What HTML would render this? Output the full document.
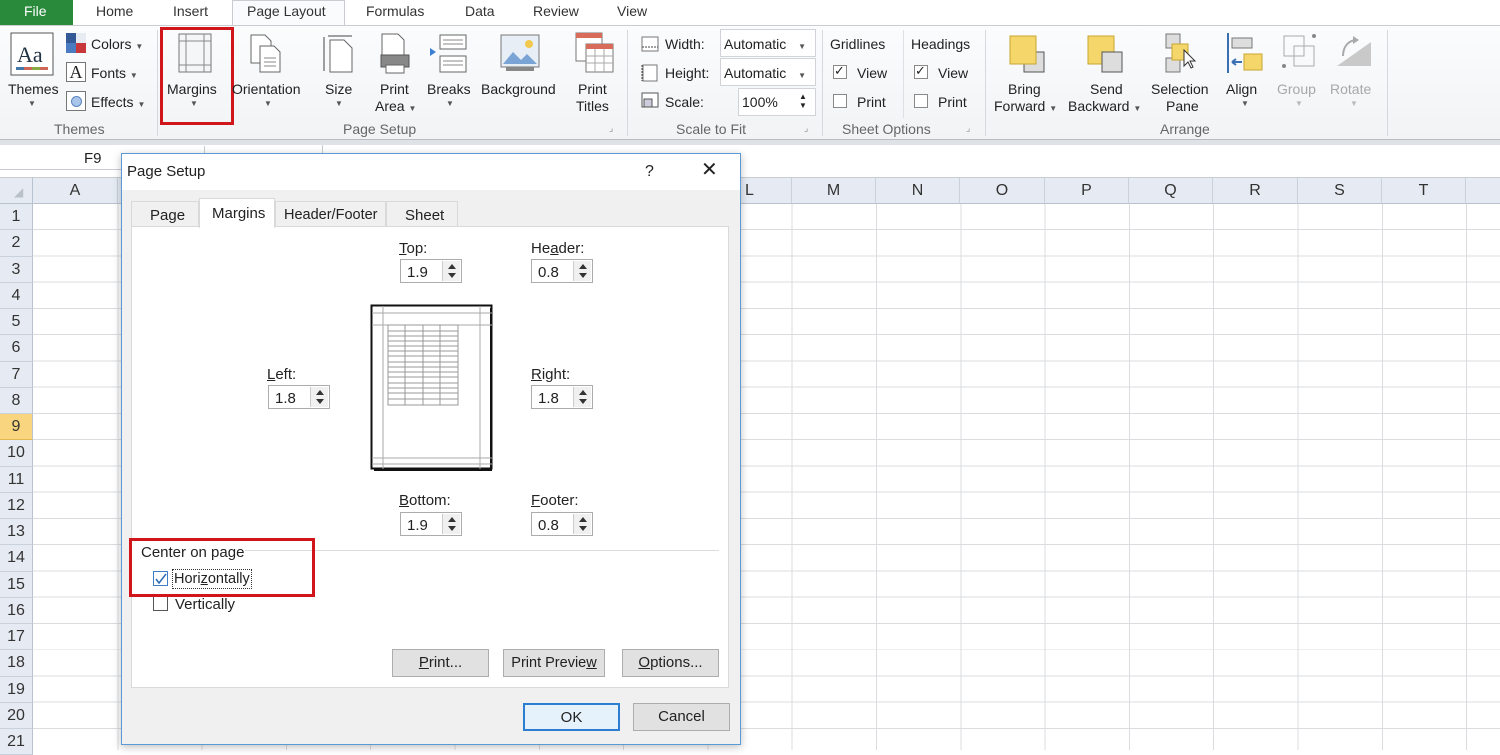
<!DOCTYPE html>
<html><head><meta charset="utf-8">
<style>
*{margin:0;padding:0;box-sizing:border-box}
body{width:1500px;height:750px;overflow:hidden;background:#fff;font-family:"Liberation Sans",sans-serif;font-size:14px;color:#222;position:relative}
.a{position:absolute}
.t{position:absolute;white-space:nowrap;line-height:1}
.tab{position:absolute;top:3px;font-size:14px;color:#333}
.lbl{position:absolute;top:121px;font-size:14px;color:#666}
.c{text-align:center}
.dd{font-size:8px;color:#555}
.sep{position:absolute;top:30px;width:1px;height:106px;background:#d5d9de}
.rh{position:absolute;left:0;width:33px;height:26.25px;background:#e6ebf3;border-bottom:1px solid #c9d1dc;border-right:1px solid #b9c3cf;text-align:center;font-size:16px;line-height:26px;color:#333;overflow:hidden}
.ch{position:absolute;top:178px;height:26px;background:#e6ebf3;border-right:1px solid #c9d1dc;border-bottom:1px solid #b9c3cf;text-align:center;font-size:16px;line-height:26px;color:#333}
.spin{position:absolute;width:62px;height:24px;border:1px solid #acacac;background:#fff}
.spin span{position:absolute;left:6px;top:4px;font-size:15px}
.spin i{position:absolute;right:1px;top:1px;width:18px;height:20px;background:#f0f0f0;border-left:1px solid #ccc}
.spin i:before{content:"";position:absolute;left:5px;top:3px;border:4px solid transparent;border-bottom:5px solid #333;border-top:0}
.spin i:after{content:"";position:absolute;left:5px;top:12px;border:4px solid transparent;border-top:5px solid #333;border-bottom:0}
.btn{position:absolute;height:28px;background:#e1e1e1;border:1px solid #adadad;text-align:center;line-height:26px;font-size:15px}
.dl{position:absolute;font-size:15px;white-space:nowrap}
.cb{position:absolute;width:15px;height:15px;border:1px solid #555;background:#fff}
.rcb{position:absolute;width:14px;height:14px;border:1px solid #888;background:#fff}
</style></head><body>
<div class="a" style="left:0;top:0;width:73px;height:25px;background:#2a8a3c"></div>
<div class="tab" style="left:24px;color:#fff">File</div>
<div class="tab" style="left:96px">Home</div>
<div class="tab" style="left:173px">Insert</div>
<div class="a" style="left:232px;top:0;width:113px;height:26px;background:#fafbfc;border:1px solid #c9ccd1;border-bottom:none"></div>
<div class="tab" style="left:247px">Page Layout</div>
<div class="tab" style="left:366px">Formulas</div>
<div class="tab" style="left:465px">Data</div>
<div class="tab" style="left:533px">Review</div>
<div class="tab" style="left:617px">View</div>
<div class="a" style="left:0;top:25px;width:1500px;height:115px;background:linear-gradient(#fbfcfd,#f1f3f5);border-top:1px solid #c9ccd1;border-bottom:1px solid #b8bcc2"></div>
<div class="a" style="left:0;top:140px;width:1500px;height:5px;background:#dfe3e8"></div>
<svg class="a" style="left:10px;top:32px" width="44" height="46"><rect x="1" y="1" width="42" height="42" fill="#fff" stroke="#555"/><text x="7" y="30" font-family="Liberation Serif" font-size="22" fill="#234">Aa</text><rect x="6" y="35" width="32" height="3" fill="#c65"/><rect x="6" y="35" width="8" height="3" fill="#47a"/><rect x="22" y="35" width="8" height="3" fill="#8a4"/></svg>
<div class="t" style="left:8px;top:82px">Themes</div><div class="t dd" style="left:28px;top:100px">▼</div>
<svg class="a" style="left:66px;top:33px" width="20" height="20"><rect width="10" height="10" fill="#335a96"/><rect x="10" width="10" height="10" fill="#e7ebf2"/><rect y="10" width="10" height="10" fill="#4a7bc0"/><rect x="10" y="10" width="10" height="10" fill="#c8383a"/></svg>
<div class="t" style="left:91px;top:37px">Colors <span class="dd">▼</span></div>
<div class="a" style="left:66px;top:62px;width:20px;height:20px;border:1px solid #777;background:#fff;font-family:'Liberation Serif';font-size:18px;text-align:center;line-height:19px">A</div>
<div class="t" style="left:91px;top:66px">Fonts <span class="dd">▼</span></div>
<div class="a" style="left:66px;top:91px;width:20px;height:20px;border:1px solid #777;background:#fff"><div class="a" style="left:4px;top:4px;width:11px;height:11px;border-radius:50%;background:#a9c6ea;border:1px solid #5a85c0"></div></div>
<div class="t" style="left:91px;top:95px">Effects <span class="dd">▼</span></div>
<div class="lbl" style="left:54px">Themes</div>
<div class="sep" style="left:157px"></div>
<svg class="a" style="left:178px;top:33px" width="34" height="40"><rect x="1" y="1" width="32" height="38" fill="#f4f6f8" stroke="#777"/><line x1="8" y1="1" x2="8" y2="39" stroke="#888"/><line x1="26" y1="1" x2="26" y2="39" stroke="#888"/><line x1="1" y1="8" x2="33" y2="8" stroke="#888"/><line x1="1" y1="32" x2="33" y2="32" stroke="#888"/></svg>
<div class="t" style="left:167px;top:82px">Margins</div><div class="t dd" style="left:190px;top:100px">▼</div>
<div class="a" style="left:160px;top:27px;width:74px;height:98px;border:3px solid #d0151b"></div>
<svg class="a" style="left:248px;top:34px" width="36" height="40"><path d="M3 1h14l6 6v22H3z" fill="#fff" stroke="#666"/><path d="M12 12h14l6 6v20H12z" fill="#fff" stroke="#666"/><path d="M16 24h12M16 28h12M16 32h12" stroke="#888"/></svg>
<div class="t" style="left:232px;top:82px">Orientation</div><div class="t dd" style="left:264px;top:100px">▼</div>
<svg class="a" style="left:322px;top:34px" width="34" height="40"><path d="M2 3v34" stroke="#444"/><path d="M6 2h24" stroke="#444"/><path d="M8 6h14l8 8v24H8z" fill="#fff" stroke="#666"/></svg>
<div class="t" style="left:325px;top:82px">Size</div><div class="t dd" style="left:335px;top:100px">▼</div>
<svg class="a" style="left:378px;top:33px" width="34" height="42"><path d="M4 1h16l6 6v20H4z" fill="#fff" stroke="#666"/><rect x="3" y="22" width="28" height="12" fill="#888" stroke="#555"/><rect x="8" y="32" width="18" height="8" fill="#fff" stroke="#666"/></svg>
<div class="t" style="left:380px;top:82px">Print</div><div class="t" style="left:375px;top:99px">Area <span class="dd">▼</span></div>
<svg class="a" style="left:428px;top:34px" width="40" height="40"><path d="M12 1h26v14H12zM12 22h26v16H12z" fill="#fff" stroke="#666"/><path d="M15 6h20M15 10h20M15 27h20M15 31h20" stroke="#888"/><path d="M2 14l6 4-6 4z" fill="#3b7fd1"/></svg>
<div class="t" style="left:427px;top:82px">Breaks</div><div class="t dd" style="left:446px;top:100px">▼</div>
<svg class="a" style="left:500px;top:34px" width="42" height="40"><rect x="1" y="1" width="38" height="32" fill="#e7eef6" stroke="#777"/><path d="M3 30l10-12 8 8 6-6 10 10z" fill="#7aa3d6"/><circle cx="29" cy="10" r="4" fill="#f2c94c"/><rect x="6" y="33" width="28" height="4" fill="#888"/></svg>
<div class="t" style="left:481px;top:82px">Background</div>
<svg class="a" style="left:575px;top:32px" width="40" height="42"><rect x="1" y="1" width="26" height="28" fill="#fff" stroke="#777"/><rect x="1" y="1" width="26" height="5" fill="#d96b5b"/><rect x="11" y="12" width="27" height="28" fill="#fff" stroke="#777"/><rect x="11" y="12" width="27" height="5" fill="#d96b5b"/><path d="M11 24h27M11 31h27M20 17v23M29 17v23" stroke="#aaa"/></svg>
<div class="t" style="left:578px;top:82px">Print</div><div class="t" style="left:576px;top:99px">Titles</div>
<div class="lbl" style="left:343px">Page Setup</div>
<div class="t" style="left:609px;top:124px;font-size:9px;color:#888">⌟</div>
<div class="sep" style="left:627px"></div>
<svg class="a" style="left:640px;top:35px" width="20" height="80"><rect x="2" y="2" width="16" height="14" fill="#fff" stroke="#777"/><path d="M2 12h16" stroke="#444" stroke-dasharray="2 1"/><rect x="3" y="30" width="14" height="16" fill="#fff" stroke="#777"/><path d="M2 30v16" stroke="#444" stroke-dasharray="2 1"/><rect x="2" y="58" width="16" height="14" fill="#fff" stroke="#555"/><rect x="4" y="64" width="8" height="8" fill="#ccd" stroke="#555"/></svg>
<div class="t" style="left:665px;top:37px">Width:</div>
<div class="t" style="left:665px;top:66px">Height:</div>
<div class="t" style="left:665px;top:95px">Scale:</div>
<div class="a" style="left:720px;top:29px;width:96px;height:28px;border:1px solid #d0d4d9;background:#fff"></div>
<div class="t" style="left:724px;top:37px">Automatic <span class="dd" style="margin-left:8px">▼</span></div>
<div class="a" style="left:720px;top:58px;width:96px;height:28px;border:1px solid #d0d4d9;background:#fff"></div>
<div class="t" style="left:724px;top:66px">Automatic <span class="dd" style="margin-left:8px">▼</span></div>
<div class="a" style="left:738px;top:88px;width:78px;height:28px;border:1px solid #d0d4d9;background:#fff"></div>
<div class="t" style="left:742px;top:95px">100%</div><div class="t" style="left:799px;top:92px;font-size:8px;line-height:9px">▲<br>▼</div>
<div class="lbl" style="left:676px">Scale to Fit</div>
<div class="t" style="left:804px;top:124px;font-size:9px;color:#888">⌟</div>
<div class="sep" style="left:822px"></div>
<div class="t" style="left:830px;top:37px">Gridlines</div>
<div class="rcb" style="left:833px;top:65px"></div><div class="t" style="left:834px;top:64px;font-size:13px">✓</div>
<div class="t" style="left:857px;top:66px">View</div>
<div class="rcb" style="left:833px;top:94px"></div><div class="t" style="left:857px;top:95px">Print</div>
<div class="a" style="left:903px;top:30px;width:1px;height:88px;background:#dde0e4"></div>
<div class="t" style="left:911px;top:37px">Headings</div>
<div class="rcb" style="left:914px;top:65px"></div><div class="t" style="left:915px;top:64px;font-size:13px">✓</div>
<div class="t" style="left:938px;top:66px">View</div>
<div class="rcb" style="left:914px;top:94px"></div><div class="t" style="left:938px;top:95px">Print</div>
<div class="lbl" style="left:842px">Sheet Options</div>
<div class="t" style="left:966px;top:124px;font-size:9px;color:#888">⌟</div>
<div class="sep" style="left:985px"></div>
<svg class="a" style="left:1008px;top:34px" width="40" height="42"><rect x="16" y="18" width="20" height="20" fill="#ddd" stroke="#555"/><rect x="2" y="2" width="26" height="28" fill="#f4d66a" stroke="#c9a530"/></svg>
<div class="t" style="left:1008px;top:82px">Bring</div><div class="t" style="left:994px;top:99px">Forward <span class="dd">▼</span></div>
<svg class="a" style="left:1086px;top:34px" width="40" height="42"><rect x="2" y="2" width="26" height="28" fill="#f4d66a" stroke="#c9a530"/><rect x="16" y="18" width="20" height="20" fill="#ddd" stroke="#555"/></svg>
<div class="t" style="left:1090px;top:82px">Send</div><div class="t" style="left:1068px;top:99px">Backward <span class="dd">▼</span></div>
<svg class="a" style="left:1164px;top:32px" width="40" height="44"><rect x="2" y="2" width="14" height="14" fill="#ddd" stroke="#777"/><rect x="2" y="26" width="14" height="14" fill="#ddd" stroke="#777"/><rect x="8" y="12" width="16" height="16" fill="#f4d66a" stroke="#c9a530"/><path d="M20 18l0 16 4-4 3 6 2-1-3-6 5 0z" fill="#fff" stroke="#333"/></svg>
<div class="t" style="left:1151px;top:82px">Selection</div><div class="t" style="left:1166px;top:99px">Pane</div>
<svg class="a" style="left:1226px;top:32px" width="40" height="44"><path d="M2 1v40" stroke="#3b6fb4" stroke-width="2"/><rect x="6" y="6" width="20" height="10" fill="#ddd" stroke="#777"/><rect x="18" y="22" width="18" height="16" fill="#f4d66a" stroke="#c9a530"/><path d="M6 30h10M6 30l4-3M6 30l4 3" stroke="#3b6fb4" stroke-width="2"/></svg>
<div class="t" style="left:1226px;top:82px">Align</div><div class="t dd" style="left:1241px;top:100px">▼</div>
<svg class="a" style="left:1282px;top:34px" width="36" height="40"><rect x="2" y="2" width="20" height="20" fill="none" stroke="#aaa"/><rect x="12" y="12" width="20" height="20" fill="none" stroke="#aaa"/><circle cx="2" cy="32" r="2" fill="#888"/><circle cx="32" cy="2" r="2" fill="#888"/></svg>
<div class="t" style="left:1277px;top:82px;color:#a8a8a8">Group</div><div class="t dd" style="left:1295px;top:100px;color:#bbb">▼</div>
<svg class="a" style="left:1335px;top:34px" width="40" height="40"><path d="M2 32L36 32 36 8z" fill="#c9c9c9"/><path d="M8 22c0-10 6-16 14-16" stroke="#aaa" fill="none" stroke-width="2"/><path d="M18 2l6 4-6 4" fill="#aaa"/></svg>
<div class="t" style="left:1330px;top:82px;color:#a8a8a8">Rotate</div><div class="t dd" style="left:1350px;top:100px;color:#bbb">▼</div>
<div class="lbl" style="left:1160px">Arrange</div>
<div class="sep" style="left:1387px"></div>
<div class="a" style="left:0;top:145px;width:1500px;height:33px;background:#fff;border-bottom:1px solid #c9cdd2"></div>
<div class="a" style="left:0;top:146px;width:205px;height:24px;border-right:1px solid #c9cdd2;border-bottom:1px solid #c9cdd2"></div>
<div class="t" style="left:84px;top:151px;font-size:15px">F9</div>
<div class="a" style="left:322px;top:145px;width:1px;height:30px;background:#c9cdd2"></div>
<div class="a" style="left:33px;top:204px;width:1467px;height:546px;background-image:repeating-linear-gradient(to bottom,transparent 0,transparent 25.25px,#dadcdf 25.25px,#dadcdf 26.25px),repeating-linear-gradient(to right,transparent 0,transparent 83.3px,#dadcdf 83.3px,#dadcdf 84.3px);background-position:0 0,1px 0"></div>
<div class="a" style="left:0;top:178px;width:33px;height:26px;background:#e6ebf3;border-right:1px solid #b9c3cf;border-bottom:1px solid #b9c3cf"></div>
<div class="t" style="left:14px;top:186px;color:#b9c0c8;font-size:12px">◢</div>
<div class="ch" style="left:33px;width:85px">A</div>
<div class="ch" style="left:118px;width:590px"></div>
<div class="ch" style="left:708px;width:84px">L</div>
<div class="ch" style="left:792px;width:84px">M</div>
<div class="ch" style="left:876px;width:84px">N</div>
<div class="ch" style="left:960px;width:85px">O</div>
<div class="ch" style="left:1045px;width:84px">P</div>
<div class="ch" style="left:1129px;width:84px">Q</div>
<div class="ch" style="left:1213px;width:85px">R</div>
<div class="ch" style="left:1298px;width:84px">S</div>
<div class="ch" style="left:1382px;width:84px">T</div>
<div class="ch" style="left:1466px;width:40px"></div>
<div class="rh" style="top:204px">1</div><div class="rh" style="top:230.25px">2</div><div class="rh" style="top:256.5px">3</div><div class="rh" style="top:282.75px">4</div><div class="rh" style="top:309px">5</div><div class="rh" style="top:335.25px">6</div><div class="rh" style="top:361.5px">7</div><div class="rh" style="top:387.75px">8</div><div class="rh" style="top:414px;background:#f8d57e;border-bottom-color:#e1b84f">9</div><div class="rh" style="top:440.25px">10</div><div class="rh" style="top:466.5px">11</div><div class="rh" style="top:492.75px">12</div><div class="rh" style="top:519px">13</div><div class="rh" style="top:545.25px">14</div><div class="rh" style="top:571.5px">15</div><div class="rh" style="top:597.75px">16</div><div class="rh" style="top:624px">17</div><div class="rh" style="top:650.25px">18</div><div class="rh" style="top:676.5px">19</div><div class="rh" style="top:702.75px">20</div><div class="rh" style="top:729px">21</div>
<div class="a" style="left:121px;top:153px;width:620px;height:592px;background:#f0f0f0;border:1px solid #5b9bd5;box-shadow:0 2px 8px rgba(0,0,0,.25)"></div>
<div class="a" style="left:122px;top:154px;width:618px;height:36px;background:#fff"></div>
<div class="t" style="left:127px;top:164px;font-size:15px">Page Setup</div>
<div class="t" style="left:645px;top:164px;font-size:16px">?</div>
<div class="t" style="left:701px;top:160px;font-size:20px">✕</div>
<div class="a" style="left:131px;top:201px;width:68px;height:26px;background:#f0f0f0;border:1px solid #d9d9d9;border-bottom:none"></div>
<div class="a" style="left:275px;top:201px;width:111px;height:26px;background:#f0f0f0;border:1px solid #d9d9d9;border-bottom:none"></div>
<div class="a" style="left:386px;top:201px;width:72px;height:26px;background:#f0f0f0;border:1px solid #d9d9d9;border-bottom:none"></div>
<div class="a" style="left:131px;top:226px;width:598px;height:462px;background:#fff;border:1px solid #d9d9d9"></div>
<div class="a" style="left:199px;top:198px;width:76px;height:30px;background:#fff;border:1px solid #d9d9d9;border-bottom:none"></div>
<div class="dl" style="left:150px;top:207px">Page</div>
<div class="dl" style="left:212px;top:205px">Margins</div>
<div class="dl" style="left:284px;top:207px;font-size:14.5px">Header/Footer</div>
<div class="dl" style="left:405px;top:207px">Sheet</div>
<div class="dl" style="left:399px;top:240px"><u>T</u>op:</div>
<div class="spin" style="left:400px;top:259px"><span>1.9</span><i></i></div>
<div class="dl" style="left:531px;top:240px">He<u>a</u>der:</div>
<div class="spin" style="left:531px;top:259px"><span>0.8</span><i></i></div>
<div class="dl" style="left:267px;top:366px"><u>L</u>eft:</div>
<div class="spin" style="left:268px;top:385px"><span>1.8</span><i></i></div>
<div class="dl" style="left:531px;top:366px"><u>R</u>ight:</div>
<div class="spin" style="left:531px;top:385px"><span>1.8</span><i></i></div>
<div class="dl" style="left:399px;top:492px"><u>B</u>ottom:</div>
<div class="spin" style="left:400px;top:512px"><span>1.9</span><i></i></div>
<div class="dl" style="left:531px;top:492px"><u>F</u>ooter:</div>
<div class="spin" style="left:531px;top:512px"><span>0.8</span><i></i></div>
<svg class="a" style="left:370px;top:304px" width="124" height="168"><rect x="1.5" y="1.5" width="120" height="163" fill="#fff" stroke="#111" stroke-width="2"/><path d="M121 4v163M4 166h118" stroke="#111" stroke-width="2"/><path d="M13 2v163M110 2v163M2 9h120M2 21h120M2 154h120M2 160h120" stroke="#aaa"/><g stroke="#999"><rect x="18" y="21" width="70" height="80" fill="none"/><path d="M35 21v80M53 21v80M70 21v80"/><path d="M18 27h70M18 32h70M18 37h70M18 42h70M18 47h70M18 52h70M18 58h70M18 63h70M18 68h70M18 73h70M18 79h70M18 84h70M18 89h70M18 95h70"/></g></svg>
<div class="dl" style="left:141px;top:544px">Center on page</div>
<div class="a" style="left:245px;top:550px;width:474px;height:1px;background:#dcdcdc"></div>
<div class="cb" style="left:153px;top:571px;border-color:#3c7fc6"></div>
<svg class="a" style="left:154px;top:572px" width="14" height="14"><path d="M2 7l3 4 7-9" stroke="#2b6cb5" stroke-width="1.5" fill="none"/></svg>
<div class="a" style="left:172px;top:569px;width:80px;height:20px;border:1px dotted #333"></div>
<div class="dl" style="left:174px;top:571px;font-size:14.5px">Hori<u>z</u>ontally</div>
<div class="cb" style="left:153px;top:596px"></div>
<div class="dl" style="left:175px;top:596px">Vertically</div>
<div class="a" style="left:129px;top:538px;width:186px;height:59px;border:3px solid #d0151b"></div>
<div class="btn" style="left:392px;top:649px;width:97px"><u>P</u>rint...</div>
<div class="btn" style="left:503px;top:649px;width:102px;font-size:14.5px">Print Previe<u>w</u></div>
<div class="btn" style="left:622px;top:649px;width:97px"><u>O</u>ptions...</div>
<div class="btn" style="left:523px;top:703px;width:97px;border:2px solid #2c7fd0;background:#e5f1fb">OK</div>
<div class="btn" style="left:633px;top:703px;width:97px">Cancel</div>
</body></html>
